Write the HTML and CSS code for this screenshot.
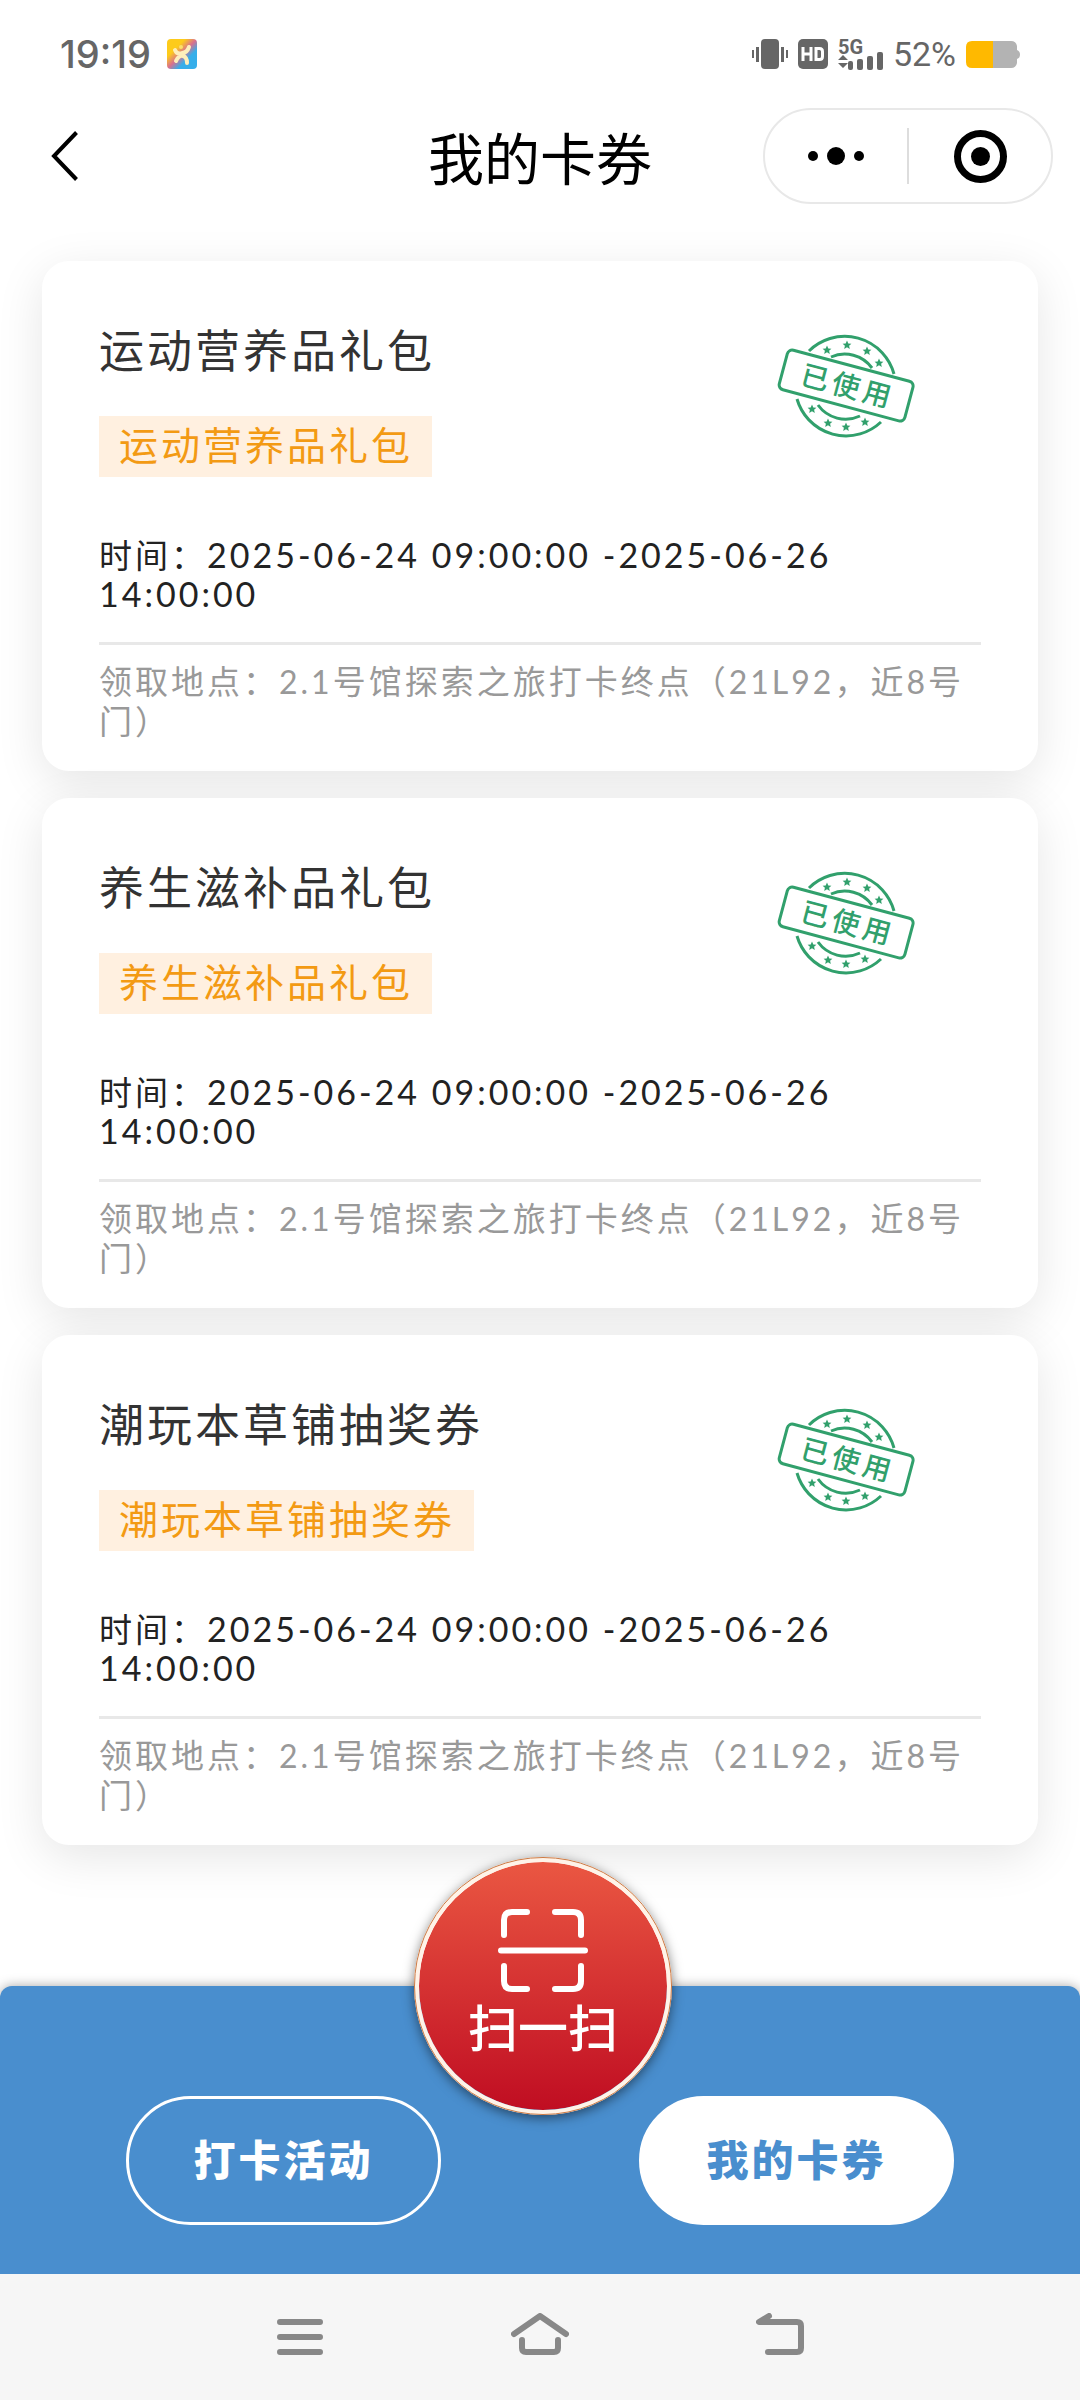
FILE: index.html
```html
<!DOCTYPE html>
<html lang="zh-CN">
<head>
<meta charset="utf-8">
<meta name="viewport" content="width=device-width, initial-scale=1">
<title>我的卡券</title>
<link rel="stylesheet" href="styles.css">
</head>
<body>
<svg class="defs" aria-hidden="true">
  <defs>
    <path id="star" d="M0-4.500 1.300-1.600 4.400-1.300 2.100.8 2.800 3.900 0 2.300-2.800 3.900-2.100.8-4.400-1.300-1.300-1.600z"/>
    <symbol id="stamp" viewBox="0 0 138 106">
      <g fill="none" stroke="currentColor" stroke-width="3">
        <path d="M32 18A51 51 0 0 1 117 41"/>
        <path d="M54 24A34 34 0 0 1 95 35"/>
        <path d="M20 66A51 51 0 0 0 104 89"/>
        <path d="M41 72A34 34 0 0 0 83 83"/>
        <rect x="4" y="32" width="130" height="41" rx="5" transform="rotate(15 69 53)"/>
      </g>
      <g fill="currentColor">
        <use href="#star" x="50" y="17"/><use href="#star" x="70" y="12"/><use href="#star" x="90" y="18"/><use href="#star" x="102" y="30"/>
        <use href="#star" x="35" y="76"/><use href="#star" x="51" y="90"/><use href="#star" x="69" y="94"/><use href="#star" x="88" y="89"/>
      </g>
      <text class="stamp-text" fill="currentColor" x="71" y="63" text-anchor="middle" transform="rotate(15 69 53)">已使用</text>
    </symbol>
  </defs>
</svg>

<div class="screen">
  <div class="statusbar">
    <span class="clock">19:19</span>
    <svg class="app-icon" width="30" height="30" viewBox="0 0 30 30">
      <defs><linearGradient id="app" x1="0" y1="0" x2="1" y2="1"><stop offset=".3" stop-color="#fdcb1b"/><stop offset=".5" stop-color="#d9708f"/><stop offset=".68" stop-color="#35aeea"/></linearGradient></defs>
      <rect width="30" height="30" rx="4" fill="url(#app)"/>
      <circle cx="14" cy="8" r="2" fill="#fbdf6a"/>
      <path d="M8 11q2 5 7 3M22 8q-2 6-7 6M9 22q3-6 7-5 4 1 4 7" fill="none" stroke="#fdeebb" stroke-width="4" stroke-linecap="round"/>
    </svg>
    <div class="status-right">
      <svg width="36" height="30" viewBox="0 0 36 30" fill="#666"><rect x="9" width="18" height="30" rx="4"/><path d="M0 11h2v8H0zM4 8h3v15H4zM29 8h3v15h-3zM34 11h2v8h-2z"/></svg>
      <svg width="30" height="30" viewBox="0 0 30 30"><rect width="30" height="30" rx="5" fill="#666"/><path d="M5 8v14M13 8v14M5 15h8M18 9.500v11h3.500q3 0 3-3v-5q0-3-3-3z" fill="none" stroke="#fff" stroke-width="3"/></svg>
      <svg width="45" height="46" viewBox="0 -8 45 46" fill="#666"><text class="signal-text" x="0" y="15">5G</text><path d="M0 21h10l-5-5zM0 24h10l-5 5z"/><rect x="10" y="22" width="5" height="9" rx="2"/><rect x="19" y="20" width="6" height="11" rx="2"/><rect x="29" y="17" width="6" height="14" rx="2"/><rect x="39" y="13" width="6" height="18" rx="2"/></svg>
      <span class="percent">52%</span>
      <svg width="54" height="27" viewBox="0 0 54 27"><path d="M27 0h18q5 0 6 5v4q3 1 3 4.500T51 18v4q-1 5-6 5H27z" fill="#b3b3b3"/><path d="M27 0H6Q0 0 0 6v15q0 6 6 6h21z" fill="#ffb900"/></svg>
    </div>
  </div>

  <header class="navbar">
    <button class="plain back" aria-label="返回"><svg width="27" height="50" viewBox="0 0 27 50"><path d="M25.500 1.500 3 25l22.500 23.500" fill="none" stroke="#000" stroke-width="4"/></svg></button>
    <h1 class="page-title">我的卡券</h1>
    <div class="capsule">
      <button class="plain" aria-label="更多"><svg width="56" height="18" viewBox="0 0 56 18"><circle cx="5" cy="9" r="5"/><circle cx="28" cy="9" r="9"/><circle cx="51" cy="9" r="5"/></svg></button>
      <span class="capsule-line"></span>
      <button class="plain" aria-label="关闭"><svg width="53" height="53" viewBox="0 0 53 53"><circle cx="26.500" cy="26.500" r="23" fill="none" stroke="#000" stroke-width="7"/><circle cx="26.500" cy="26.500" r="9.500"/></svg></button>
    </div>
  </header>

  <main class="coupons">
    <article class="card">
      <div class="card-head">
        <div><h2 class="card-title">运动营养品礼包</h2><span class="tag">运动营养品礼包</span></div>
        <svg class="stamp" role="img" aria-label="已使用"><use href="#stamp"/></svg>
      </div>
      <p class="time">时间：<span class="num">2025-06-24 09:00:00 -2025-06-26 14:00:00</span></p>
      <p class="place">领取地点：<span class="num">2.1</span>号馆探索之旅打卡终点（<span class="num">21L92</span>，近<span class="num">8</span>号门）</p>
    </article>
    <article class="card">
      <div class="card-head">
        <div><h2 class="card-title">养生滋补品礼包</h2><span class="tag">养生滋补品礼包</span></div>
        <svg class="stamp" role="img" aria-label="已使用"><use href="#stamp"/></svg>
      </div>
      <p class="time">时间：<span class="num">2025-06-24 09:00:00 -2025-06-26 14:00:00</span></p>
      <p class="place">领取地点：<span class="num">2.1</span>号馆探索之旅打卡终点（<span class="num">21L92</span>，近<span class="num">8</span>号门）</p>
    </article>
    <article class="card">
      <div class="card-head">
        <div><h2 class="card-title">潮玩本草铺抽奖券</h2><span class="tag">潮玩本草铺抽奖券</span></div>
        <svg class="stamp" role="img" aria-label="已使用"><use href="#stamp"/></svg>
      </div>
      <p class="time">时间：<span class="num">2025-06-24 09:00:00 -2025-06-26 14:00:00</span></p>
      <p class="place">领取地点：<span class="num">2.1</span>号馆探索之旅打卡终点（<span class="num">21L92</span>，近<span class="num">8</span>号门）</p>
    </article>
  </main>

  <footer class="tabbar">
    <button class="tab">打卡活动</button>
    <button class="tab active">我的卡券</button>
    <button class="scan">
      <svg width="90" height="84" viewBox="0 0 90 84" fill="none" stroke="#fff" stroke-width="6" stroke-linecap="round"><path d="M6 26V11q0-8 8-8h15M57 3h18q8 0 8 8v15M6 57v15q0 8 8 8h15M57 80h18q8 0 8-8V57M3 41.500h84"/></svg>
      <span>扫一扫</span>
    </button>
  </footer>

  <nav class="sysnav">
    <button class="plain" aria-label="最近任务"><svg width="46" height="42" viewBox="0 0 46 42"><path d="M3 9h40M3 24h40M3 39h40" class="sys-line"/></svg></button>
    <button class="plain" aria-label="主屏幕"><svg width="58" height="42" viewBox="0 0 58 42"><path d="M3 21 29 3l26 18M11 27v8q0 4 4 4h28q4 0 4-4v-8" class="sys-line"/></svg></button>
    <button class="plain" aria-label="返回上一级"><svg width="48" height="42" viewBox="0 0 48 42"><path d="M13 3 3 9h38q4 0 4 4v22q0 4-4 4H12" class="sys-line"/></svg></button>
  </nav>
</div>
</body>
</html>
```
FILE: styles.css
```css
* { box-sizing: border-box; }

body {
  margin: 0;
  background: #fff;
  color: #222;
  font-family: "Noto Sans CJK SC", sans-serif;
}

h1, h2, p { margin: 0; font-weight: 400; }
svg { display: block; flex: none; }

button {
  margin: 0;
  padding: 0;
  font-family: inherit;
  cursor: pointer;
}

.plain {
  display: flex;
  align-items: center;
  justify-content: center;
  border: 0;
  background: none;
}

.defs { position: absolute; width: 0; height: 0; }

.screen {
  display: flex;
  flex-direction: column;
  min-height: 100vh;
}

/* Status bar */
.statusbar {
  display: flex;
  align-items: center;
  height: 108px;
  padding: 0 60px;
  color: #666;
}

.clock {
  font: 500 38px/40px Inter, sans-serif;
}

.app-icon { margin-left: 16px; }

.status-right {
  display: flex;
  align-items: center;
  gap: 10px;
  margin-left: auto;
}

.signal-text { font: 700 20px Roboto, sans-serif; }
.percent { font: 400 34px/40px Roboto, sans-serif; }

/* Title bar */
.navbar {
  display: grid;
  grid-template-columns: 1fr auto 1fr;
  align-items: center;
  height: 96px;
  padding: 0 27px;
}

.back { justify-self: start; margin-left: 24px; }

.page-title {
  color: #000;
  font-size: 56px;
  line-height: 80px;
}

.capsule {
  display: grid;
  grid-template-columns: 1fr 2px 1fr;
  align-items: center;
  justify-self: end;
  width: 290px;
  height: 96px;
  border: 2px solid #e8e8e8;
  border-radius: 48px;
}

.capsule-line { height: 56px; background: #ddd; }

/* Coupons */
.coupons {
  display: flex;
  flex: 1;
  flex-direction: column;
  gap: 27px;
  padding: 57px 42px 138px;
}

.card {
  padding: 57px 57px 31px;
  border-radius: 27px;
  background: #fff;
  box-shadow: 0 12px 48px rgba(0, 0, 0, 0.1);
  letter-spacing: 3px;
}

.card-head {
  display: flex;
  justify-content: space-between;
  height: 213px;
}

.card-title {
  color: #333;
  font-size: 45px;
  line-height: 62px;
}

.tag {
  display: block;
  width: fit-content;
  margin-top: 36px;
  padding: 0 19px 6px 20px;
  background: #fff0e0;
  color: #f39a13;
  font-size: 39px;
  line-height: 55px;
}

.stamp {
  width: 138px;
  height: 106px;
  margin: 15px 66px 0 0;
  color: #31a06c;
}

.stamp-text { font-size: 28px; font-weight: 500; letter-spacing: 4px; }

.time,
.place {
  font-size: 33px;
  line-height: 39px;
}

.time {
  margin-top: 4px;
  padding-bottom: 29px;
}

.place {
  padding-top: 16px;
  border-top: 3px solid #e8e8e8;
  color: #999;
}

.num { font-family: Lato, sans-serif; font-size: 34px; }
.place .num { font-size: 32px; }

/* Bottom bar */
.tabbar {
  position: relative;
  display: flex;
  justify-content: space-between;
  padding: 110px 126px 49px;
  border-radius: 12px 12px 0 0;
  background: #498ece;
  box-shadow: 0 0 12px rgba(0, 0, 0, 0.35);
}

.tab {
  width: 315px;
  height: 129px;
  padding-bottom: 6px;
  border: 3px solid #fff;
  border-radius: 65px;
  background: none;
  color: #fff;
  font-size: 42px;
  font-weight: 900;
  letter-spacing: 3px;
}

.tab.active { background: #fff; color: #498ece; }

.scan {
  position: absolute;
  top: -129px;
  left: calc(50% - 126px);
  display: flex;
  flex-direction: column;
  align-items: center;
  width: 258px;
  height: 258px;
  padding-top: 47px;
  border: 5px solid #fff3e8;
  border-radius: 50%;
  outline: 1px solid #cc7a45;
  outline-offset: -1px;
  background: linear-gradient(#ea5742, #c00d22) padding-box;
  box-shadow: 0 3px 12px rgba(0, 0, 0, 0.5);
  color: #fff;
  font-size: 50px;
  font-weight: 500;
  line-height: 64px;
}

/* System navigation */
.sysnav {
  position: relative;
  display: grid;
  grid-template-columns: repeat(3, 240px);
  justify-content: center;
  height: 126px;
  padding-bottom: 6px;
  background: #f6f6f6;
}

.sys-line {
  fill: none;
  stroke: #888;
  stroke-width: 6;
  stroke-linecap: round;
  stroke-linejoin: round;
}
```
